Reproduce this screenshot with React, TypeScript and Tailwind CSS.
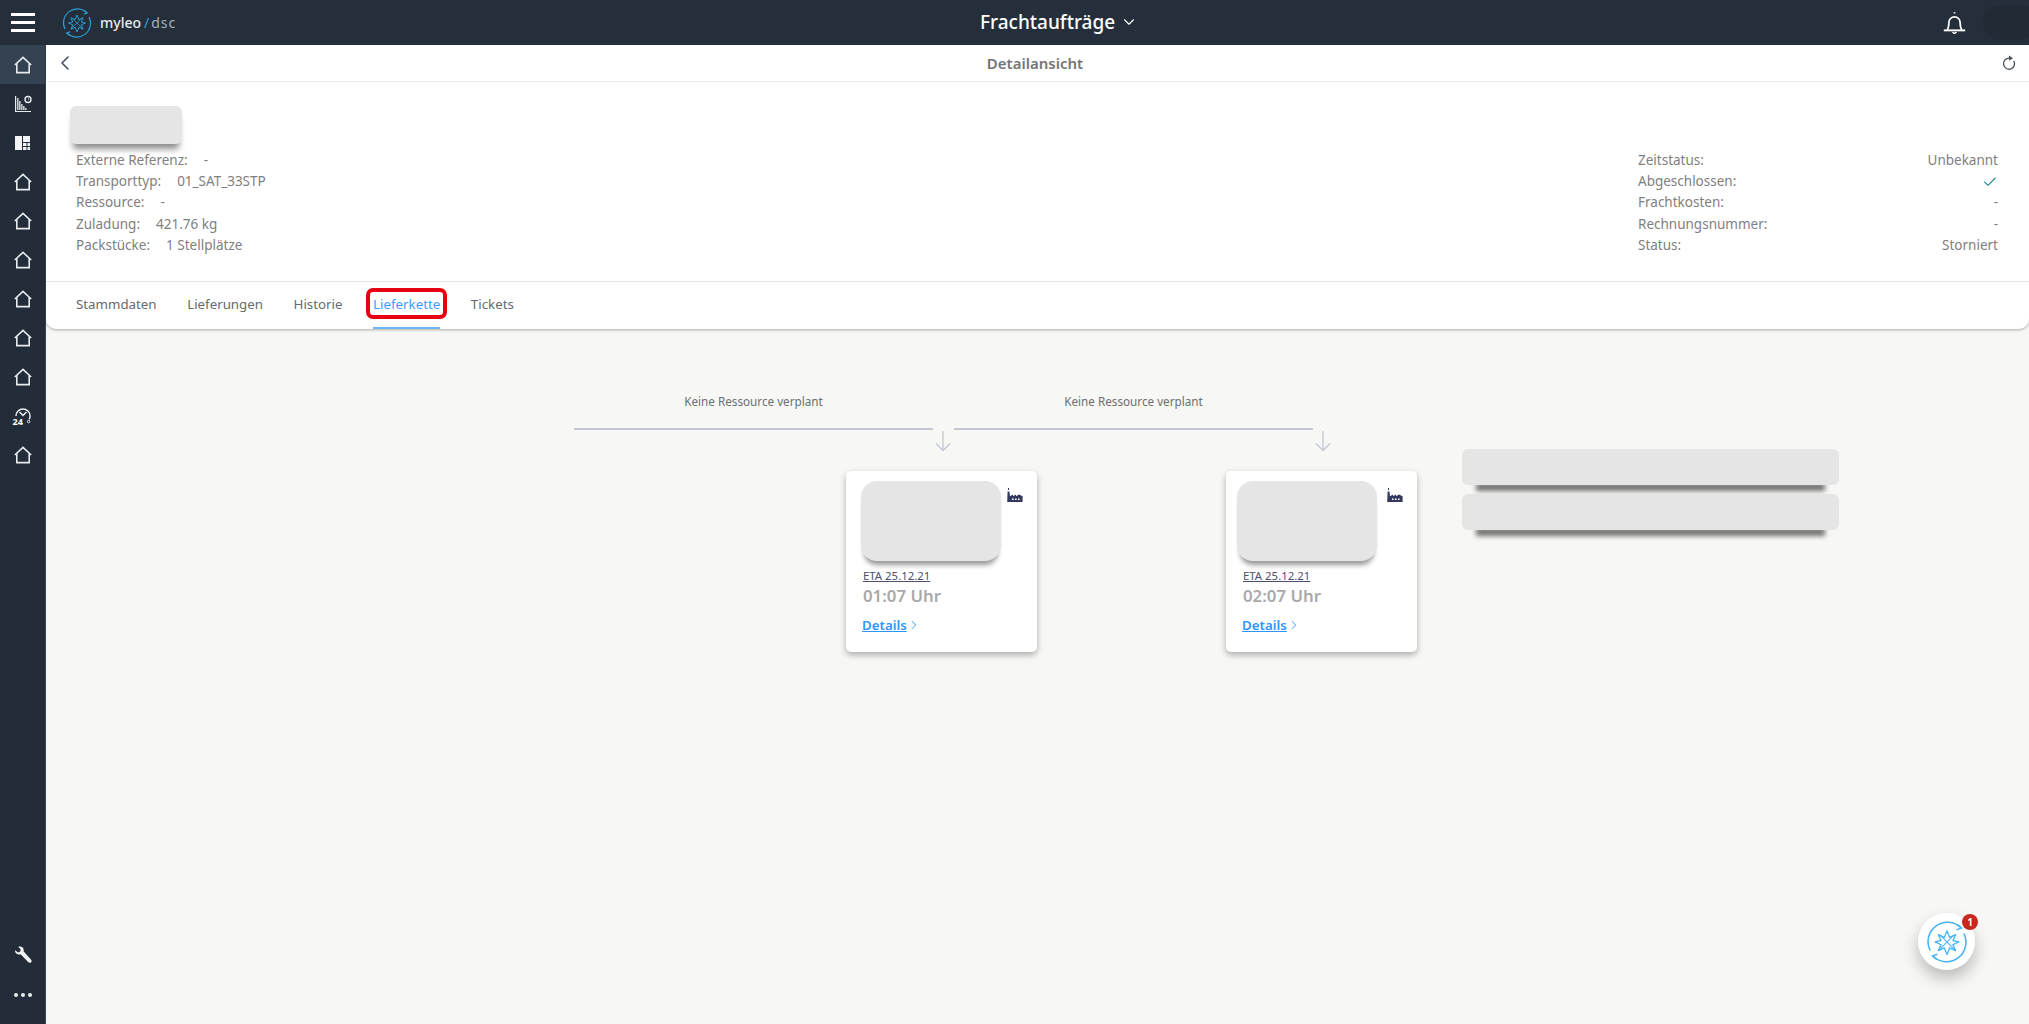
import React from 'react';
import { ChevronDown, ChevronLeft, ChevronRight, Check } from 'lucide-react';

const Logo = ({ className = '', color = '#2b9fd8' }: { className?: string; color?: string }) => (
  <svg viewBox="1.5 1.5 27 27" fill="none" className={className}>
    <path d="M4.2 20.5A12.5 12.5 0 0 1 24 5.8" stroke={color} strokeWidth="1" />
    <path d="M25.8 9.5A12.5 12.5 0 0 1 6 24.2" stroke={color} strokeWidth="1" />
    <path d="M21.5 3.8l2.8 2.2-3.2 1.2" stroke={color} strokeWidth="1" />
    <path d="M8.5 26.2l-2.8-2.2 3.2-1.2" stroke={color} strokeWidth="1" />
    <g transform="translate(2.25 2.25) scale(0.85)">
      <path
        d="M15 6.5l2 5 4.5-2-2 4.5 4.5 1-4.5 2 2 4.5-4.5-2-2 5-2-5-4.5 2 2-4.5-4.5-2 4.5-1-2-4.5 4.5 2z"
        stroke={color}
        strokeWidth="1"
        strokeLinejoin="round"
      />
      <path d="M10 10l10 10M20 10L10 20" stroke={color} strokeWidth="0.8" />
    </g>
  </svg>
);

const HomeIcon = () => (
  <svg viewBox="0 0 18 18" fill="none" stroke="#e8ebee" strokeWidth="1.6" className="h-[18px] w-[18px]">
    <path d="M.8 9L9 1.300 17.200 9" />
    <path d="M2.800 7.200V16.600H15.200V7.200" />
  </svg>
);

const ChartIcon = () => (
  <svg viewBox="0 0 18 18" fill="#e8ebee" className="h-[18px] w-[18px]">
    <path d="M1 1h1.2v15H17v1H1z" />
    <path d="M3.2 3h1.3v12H3.2zM5.2 6h1.3v9H5.2zM7.2 9h1.3v6H7.2zM9.2 11h1.3v4H9.2zM11.2 13h1.3v2h-1.3z" />
    <circle cx="14" cy="4.5" r="3" fill="none" stroke="#e8ebee" strokeWidth="1.4" />
    <path d="M14 3v1.5h1.5z" />
  </svg>
);

const BoardIcon = () => (
  <svg viewBox="0 0 16 16" fill="#f2f4f6" className="h-4 w-4">
    <path d="M0 1h7v14H0zM8 1h7v6H8zM8 8h3.5v3H8zM12.5 8H15v3h-2.5zM8 12h3.5v3H8zM12.5 12H15v3h-2.5z" />
  </svg>
);

const GaugeIcon = () => (
  <div className="relative h-[18px] w-[20px]">
    <svg viewBox="0 0 20 18" fill="none" stroke="#e8ebee" strokeWidth="1.5" className="h-[18px] w-[20px]">
      <path d="M3 9A7 7 0 0 1 17 9c0 1.4-.3 2.4-.8 3.4" />
      <path d="M6.5 5l3.5 3.4L13.5 5" />
      <circle cx="15.6" cy="14.6" r="1.2" strokeWidth="1" />
    </svg>
    <span className="absolute bottom-[-1px] left-0 text-[9px] leading-[9px] font-bold text-white">24</span>
  </div>
);

const WrenchIcon = () => (
  <svg viewBox="0 0 18 18" fill="#f2f4f6" className="h-[18px] w-[18px]">
    <path d="M1.2 4.2L4 6.6 6.4 5.6 6.6 3 4.2 1C6.5 0 9 .9 9.6 3.2c.2.8.1 1.5-.1 2.1l7.6 8.4c.8.9.7 1.9 0 2.6s-1.9.8-2.7-.1L6.6 8.3c-.8.3-1.7.3-2.6 0C1.9 7.5.7 6.2 1.2 4.2z" />
  </svg>
);

const FactoryIcon = () => (
  <svg viewBox="0 0 16 15" fill="#33395c" className="h-[15px] w-4">
    <path d="M1 0h1v2H1zM.6 3.5h1.8L3 8.2l3-1.6v1.6l3-1.6v1.6l3-1.6 3.6 1.6V14H.2z" />
    <path d="M5 10.5h1.6V12H5zM8 10.5h1.6V12H8zM11 10.5h1.6V12H11z" fill="#ffffff" />
  </svg>
);

const BellIcon = () => (
  <svg viewBox="0 0 24 24" fill="none" stroke="#ffffff" strokeWidth="1.500" className="h-[27px] w-[27px]">
    <path d="M5.500 18.500c1.200-1.600 1.500-3.400 1.500-6.500a5 5 0 0 1 10 0c0 3.100.3 4.900 1.500 6.500" />
    <path d="M12 4V2.800" />
    <path d="M2.500 19h19" strokeWidth="1.700" />
    <path d="M10.500 20.500a1.600 1.600 0 0 0 3 0" />
  </svg>
);

const RefreshIcon = () => (
  <svg viewBox="0 0 16 16" fill="none" className="h-[16px] w-[16px]">
    <path d="M8 3.200a5.500 5.500 0 1 0 4.700 2.600" stroke="#46505c" strokeWidth="1.300" />
    <path d="M8 .6l4 2.600-4 2.600z" fill="#46505c" />
  </svg>
);

const DownArrow = () => (
  <svg viewBox="0 0 16 22" fill="none" stroke="#c3c7d2" strokeWidth="1.300" className="h-[22px] w-4">
    <path d="M8 1v19.500" />
    <path d="M1 13.500l7 7 7-7" />
  </svg>
);

const navIcons = [
  <HomeIcon key="a" />,
  <ChartIcon key="b" />,
  <BoardIcon key="c" />,
  <HomeIcon key="d" />,
  <HomeIcon key="e" />,
  <HomeIcon key="f" />,
  <HomeIcon key="g" />,
  <HomeIcon key="h" />,
  <HomeIcon key="i" />,
  <GaugeIcon key="j" />,
  <HomeIcon key="k" />,
];

const leftInfo = [
  ['Externe Referenz:', '-'],
  ['Transporttyp:', '01_SAT_33STP'],
  ['Ressource:', '-'],
  ['Zuladung:', '421.76 kg'],
  ['Packstücke:', '1 Stellplätze'],
];

const rightInfo: [string, string | null][] = [
  ['Zeitstatus:', 'Unbekannt'],
  ['Abgeschlossen:', null],
  ['Frachtkosten:', '-'],
  ['Rechnungsnummer:', '-'],
  ['Status:', 'Storniert'],
];

const tabs = ['Stammdaten', 'Lieferungen', 'Historie', 'Lieferkette', 'Tickets'];

const StopCard = ({ time, boxClass }: { time: string; boxClass: string }) => (
  <div className="flex h-[181px] w-[191px] flex-col rounded-[5px] bg-white pt-[10px] pl-[15px] shadow-[0_3px_6px_rgba(0,0,0,0.3)]">
    <div className="flex items-start gap-[6px]">
      <div className={`h-[80px] w-[140px] rounded-[16px] bg-[#e5e5e5] shadow-[0_7px_5px_-3px_rgba(0,0,0,0.4)] ${boxClass}`} />
      <div className="pt-[7px]">
        <FactoryIcon />
      </div>
    </div>
    <div className="mt-[7px] pl-[2px] text-[11.4px] leading-4 text-[#4c4f6e] underline">ETA 25.12.21</div>
    <div className="pl-[2px] text-[16.8px] leading-6 font-semibold text-[#a9a9a9]">{time}</div>
    <div className="mt-[7px] flex items-center pl-[1px] text-[13.300px] leading-5 font-semibold text-[#2f96ff]">
      <span className="underline">Details</span>
      <ChevronRight className="h-[14px] w-[14px] text-[#5aaaf8]" strokeWidth={1.800} />
    </div>
  </div>
);

const Segment = ({ time, boxClass }: { time: string; boxClass: string }) => (
  <div className="w-[380px] shrink-0">
    <div className="w-[359px] text-center text-[11.700px] leading-4 text-[#6b6f72]">Keine Ressource verplant</div>
    <div className="mt-[19px] h-[2px] w-[359px] bg-[#c3c7d2]" />
    <div className="flex w-[380px] justify-end pr-[3px]">
      <DownArrow />
    </div>
    <div className="mt-[19px] ml-[272px] w-[191px]">
      <StopCard time={time} boxClass={boxClass} />
    </div>
  </div>
);

export default function App() {
  return (
    <div className="flex h-screen flex-col overflow-hidden bg-[#f7f7f5] font-['Noto_Sans',sans-serif]">
      <header className="relative flex h-[45px] shrink-0 items-center bg-[#242f3b]">
        <div className="flex w-[46px] shrink-0 flex-col items-center gap-[5px]">
          <span className="h-[3px] w-6 bg-white" />
          <span className="h-[3px] w-6 bg-white" />
          <span className="h-[3px] w-6 bg-white" />
        </div>
        <Logo className="ml-[16px] h-[30px] w-[30px]" />
        <span className="ml-2 text-[14px] leading-5 font-medium text-[#e8ebee]">myleo</span>
        <span className="ml-[3px] text-[14px] leading-5 text-[#2b9fd8]">/</span>
        <span className="ml-[2px] text-[14px] leading-5 tracking-[1px] text-[#a9b0b7]">dsc</span>
        <div className="absolute top-[10px] left-[980px] flex items-center gap-[5px] text-white">
          <span className="text-[19px] leading-6 font-medium">Frachtaufträge</span>
          <ChevronDown className="h-[18px] w-[18px]" strokeWidth={1.500} />
        </div>
        <div className="ml-auto flex items-center gap-[15px]">
          <BellIcon />
          <div className="mr-[-8px] h-[35px] w-[54px] rounded-full bg-[#212b36]" />
        </div>
      </header>

      <div className="flex min-h-0 flex-1">
        <aside className="flex w-[46px] shrink-0 flex-col items-stretch border-r border-[#3a4654] bg-[#222d39]">
          {navIcons.map((icon, i) => (
            <div
              key={i}
              className={`flex h-[39px] items-center justify-center ${i === 0 ? 'bg-[#344252]' : ''}`}
            >
              {icon}
            </div>
          ))}
          <div className="mt-auto flex flex-col items-center pb-[27px]">
            <WrenchIcon />
            <div className="mt-[29px] flex gap-[3px]">
              <span className="h-[4px] w-[4px] rounded-full bg-[#e8ebee]" />
              <span className="h-[4px] w-[4px] rounded-full bg-[#e8ebee]" />
              <span className="h-[4px] w-[4px] rounded-full bg-[#e8ebee]" />
            </div>
          </div>
        </aside>

        <main className="min-w-0 flex-1">
          <section className="rounded-b-[10px] bg-white shadow-[0_1px_3px_rgba(0,0,0,0.3)]">
            <div className="flex h-[37px] items-center justify-between border-b border-[#ececec] pr-[12px] pl-[7px]">
              <ChevronLeft className="h-6 w-6 text-[#46505c]" strokeWidth={1.600} />
              <span className="mr-[8px] text-[15px] font-semibold text-[#757575]">Detailansicht</span>
              <RefreshIcon />
            </div>

            <div className="border-b border-[#e3e3e3] pt-[24px] pr-[31px] pb-[25px] pl-[24px]">
              <div className="h-[38px] w-[112px] rounded-[6px] bg-[#e5e5e5] shadow-[0_8px_6px_-3px_rgba(0,0,0,0.45)]" />
              <div className="mt-[6px] flex justify-between pl-[6px] text-[13.500px] leading-[21.200px] text-[#808080]">
                <div>
                  {leftInfo.map(([label, value]) => (
                    <div key={label} className="flex gap-4">
                      <span>{label}</span>
                      <span>{value}</span>
                    </div>
                  ))}
                </div>
                <div className="w-[360px]">
                  {rightInfo.map(([label, value]) => (
                    <div key={label} className="flex items-center justify-between">
                      <span>{label}</span>
                      {value ?? <Check className="h-[16px] w-[16px] text-[#1f8a8a]" strokeWidth={1.600} />}
                    </div>
                  ))}
                </div>
              </div>
            </div>

            <div className="flex h-[47px] gap-[30.600px] pl-[30px]">
              {tabs.map((tab) => (
                <div
                  key={tab}
                  className={`relative flex items-center border-b-2 pt-[1px] text-[13.300px] ${
                    tab === 'Lieferkette'
                      ? 'border-[#6fb5f7] text-[#3c9bff]'
                      : 'border-transparent text-[#666a6e]'
                  }`}
                >
                  {tab}
                  {tab === 'Lieferkette' && (
                    <span className="absolute top-[6px] right-[-7px] left-[-7px] h-[31px] rounded-[7px] border-[4px] border-[#e60012]" />
                  )}
                </div>
              ))}
            </div>
          </section>

          <div className="flex pt-[64px] pl-[528px]">
            <Segment time="01:07 Uhr" boxClass="" />
            <Segment time="02:07 Uhr" boxClass="-ml-[4px] mr-[4px]" />
            <div className="ml-[128px] flex w-[377px] shrink-0 flex-col gap-[9px] pt-[56px]">
              <div className="h-[36px] rounded-[6px] bg-[#e5e5e5] shadow-[0_20px_5px_-14px_rgba(0,0,0,0.55)]" />
              <div className="h-[36px] rounded-[6px] bg-[#e5e5e5] shadow-[0_20px_5px_-14px_rgba(0,0,0,0.55)]" />
            </div>
          </div>
        </main>
      </div>

      <div className="fixed top-[913px] left-[1918px] flex h-[57px] w-[57px] items-center justify-center rounded-full bg-white shadow-[0_8px_16px_rgba(0,0,0,0.25)]">
        <Logo className="h-[42px] w-[42px]" color="#45b4f2" />
        <span className="absolute top-[1px] right-[-3px] flex h-4 w-4 items-center justify-center rounded-full bg-[#c8281e] text-[10px] leading-none font-bold text-white">
          1
        </span>
      </div>
    </div>
  );
}
